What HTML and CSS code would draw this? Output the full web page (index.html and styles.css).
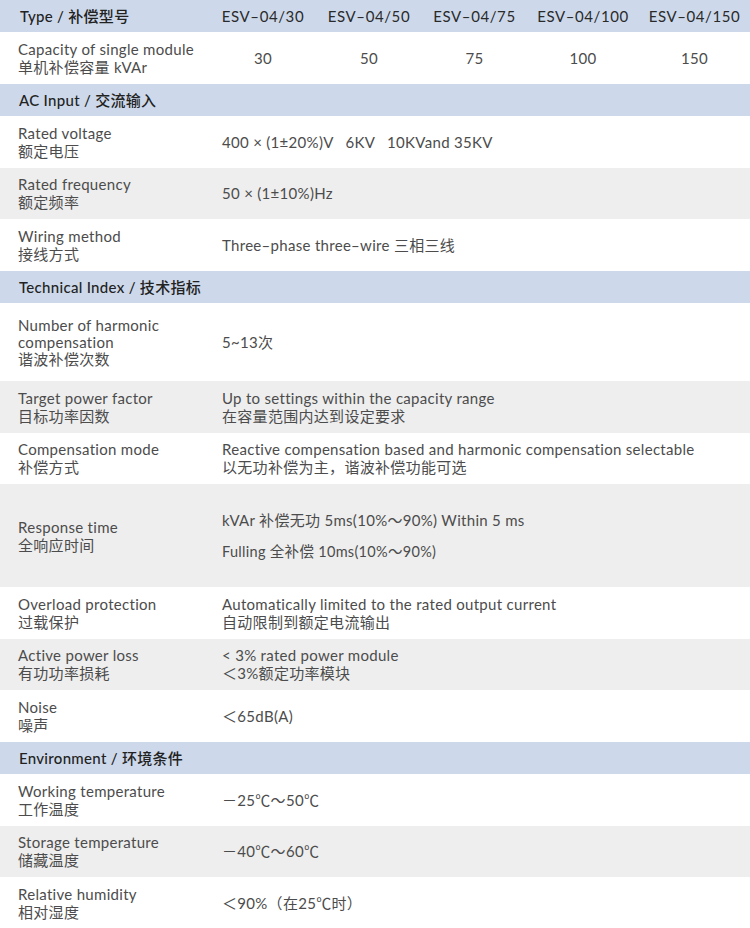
FILE: index.html
```html
<!DOCTYPE html>
<html lang="zh-CN">
<head>
<meta charset="utf-8">
<title>ESV Specifications</title>
<link rel="stylesheet" href="styles.css">
</head>
<body>
<div class="spec">
  <div class="models head">
    <div class="first">Type / 补偿型号</div>
    <div class="c">ESV–04/30</div>
    <div class="c">ESV–04/50</div>
    <div class="c">ESV–04/75</div>
    <div class="c">ESV–04/100</div>
    <div class="c">ESV–04/150</div>
  </div>
  <div class="models cap">
    <div class="first label"><span>Capacity of single module</span><span>单机补偿容量 kVAr</span></div>
    <div class="c">30</div>
    <div class="c">50</div>
    <div class="c">75</div>
    <div class="c">100</div>
    <div class="c">150</div>
  </div>

  <div class="band">AC Input / 交流输入</div>
  <div class="row">
    <div class="label"><span>Rated voltage</span><span>额定电压</span></div>
    <div class="value">400 × (1±20%)V&nbsp;&nbsp;&nbsp;6KV&nbsp;&nbsp;&nbsp;10KVand 35KV</div>
  </div>
  <div class="row grey">
    <div class="label"><span>Rated frequency</span><span>额定频率</span></div>
    <div class="value">50 × (1±10%)Hz</div>
  </div>
  <div class="row">
    <div class="label"><span>Wiring method</span><span>接线方式</span></div>
    <div class="value">Three–phase three–wire 三相三线</div>
  </div>

  <div class="band">Technical Index / 技术指标</div>
  <div class="row tall">
    <div class="label tight"><span>Number of harmonic</span><span>compensation</span><span>谐波补偿次数</span></div>
    <div class="value">5~13次</div>
  </div>
  <div class="row grey">
    <div class="label"><span>Target power factor</span><span>目标功率因数</span></div>
    <div class="value"><span>Up to settings within the capacity range</span><span>在容量范围内达到设定要求</span></div>
  </div>
  <div class="row">
    <div class="label"><span>Compensation mode</span><span>补偿方式</span></div>
    <div class="value"><span>Reactive compensation based and harmonic compensation selectable</span><span>以无功补偿为主，谐波补偿功能可选</span></div>
  </div>
  <div class="row grey xtall">
    <div class="label"><span>Response time</span><span>全响应时间</span></div>
    <div class="value spaced"><span>kVAr 补偿无功 5ms(10%～90%) Within 5 ms</span><span class="small">Fulling 全补偿 10ms(10%～90%)</span></div>
  </div>
  <div class="row">
    <div class="label"><span>Overload protection</span><span>过载保护</span></div>
    <div class="value"><span>Automatically limited to the rated output current</span><span>自动限制到额定电流输出</span></div>
  </div>
  <div class="row grey">
    <div class="label"><span>Active power loss</span><span>有功功率损耗</span></div>
    <div class="value"><span>&lt; 3% rated power module</span><span>＜3%额定功率模块</span></div>
  </div>
  <div class="row">
    <div class="label"><span>Noise</span><span>噪声</span></div>
    <div class="value">＜65dB(A)</div>
  </div>

  <div class="band">Environment / 环境条件</div>
  <div class="row">
    <div class="label"><span>Working temperature</span><span>工作温度</span></div>
    <div class="value">－25℃～50℃</div>
  </div>
  <div class="row grey">
    <div class="label"><span>Storage temperature</span><span>储藏温度</span></div>
    <div class="value">－40℃～60℃</div>
  </div>
  <div class="row">
    <div class="label"><span>Relative humidity</span><span>相对湿度</span></div>
    <div class="value">＜90%（在25℃时）</div>
  </div>
</div>
</body>
</html>
```

FILE: styles.css
```css
html, body {
  margin: 0;
  padding: 0;
  background: #ffffff;
}

body {
  font-family: "Lato", "Noto Sans CJK SC", sans-serif;
  font-size: 15px;
  line-height: 18px;
  letter-spacing: 0.3px;
  color: #4c4c4c;
}

.spec {
  width: 750px;
  display: flex;
  flex-direction: column;
}

.models {
  display: grid;
  grid-template-columns: 210px 106px 106px 105px 112px 111px;
  align-items: center;
}

.models .c {
  text-align: center;
}

.head {
  height: 32px;
  background: #cdd9ea;
  color: #222222;
}

.head .first {
  padding-left: 20px;
  font-weight: 500;
}

.head .c {
  letter-spacing: 0.6px;
  color: #2a2a2a;
}

.cap {
  height: 51.5px;
}

.cap .first {
  padding-left: 18px;
}

.band {
  height: 32.5px;
  background: #cdd9ea;
  color: #222222;
  display: flex;
  align-items: center;
  padding-left: 19px;
  font-weight: 500;
}

.row {
  height: 51.5px;
  display: flex;
  align-items: center;
}

.row.grey {
  background: #eeeeee;
}

.row.tall {
  height: 78px;
}

.row.xtall {
  height: 103px;
}

.label {
  display: flex;
  flex-direction: column;
}

.row .label {
  width: 222px;
  padding-left: 18px;
  box-sizing: border-box;
  flex: none;
}

.label.tight {
  line-height: 17px;
}

.value {
  display: flex;
  flex-direction: column;
}

.value.spaced {
  gap: 14px;
}

.value .small {
  font-size: 14.5px;
}
```
